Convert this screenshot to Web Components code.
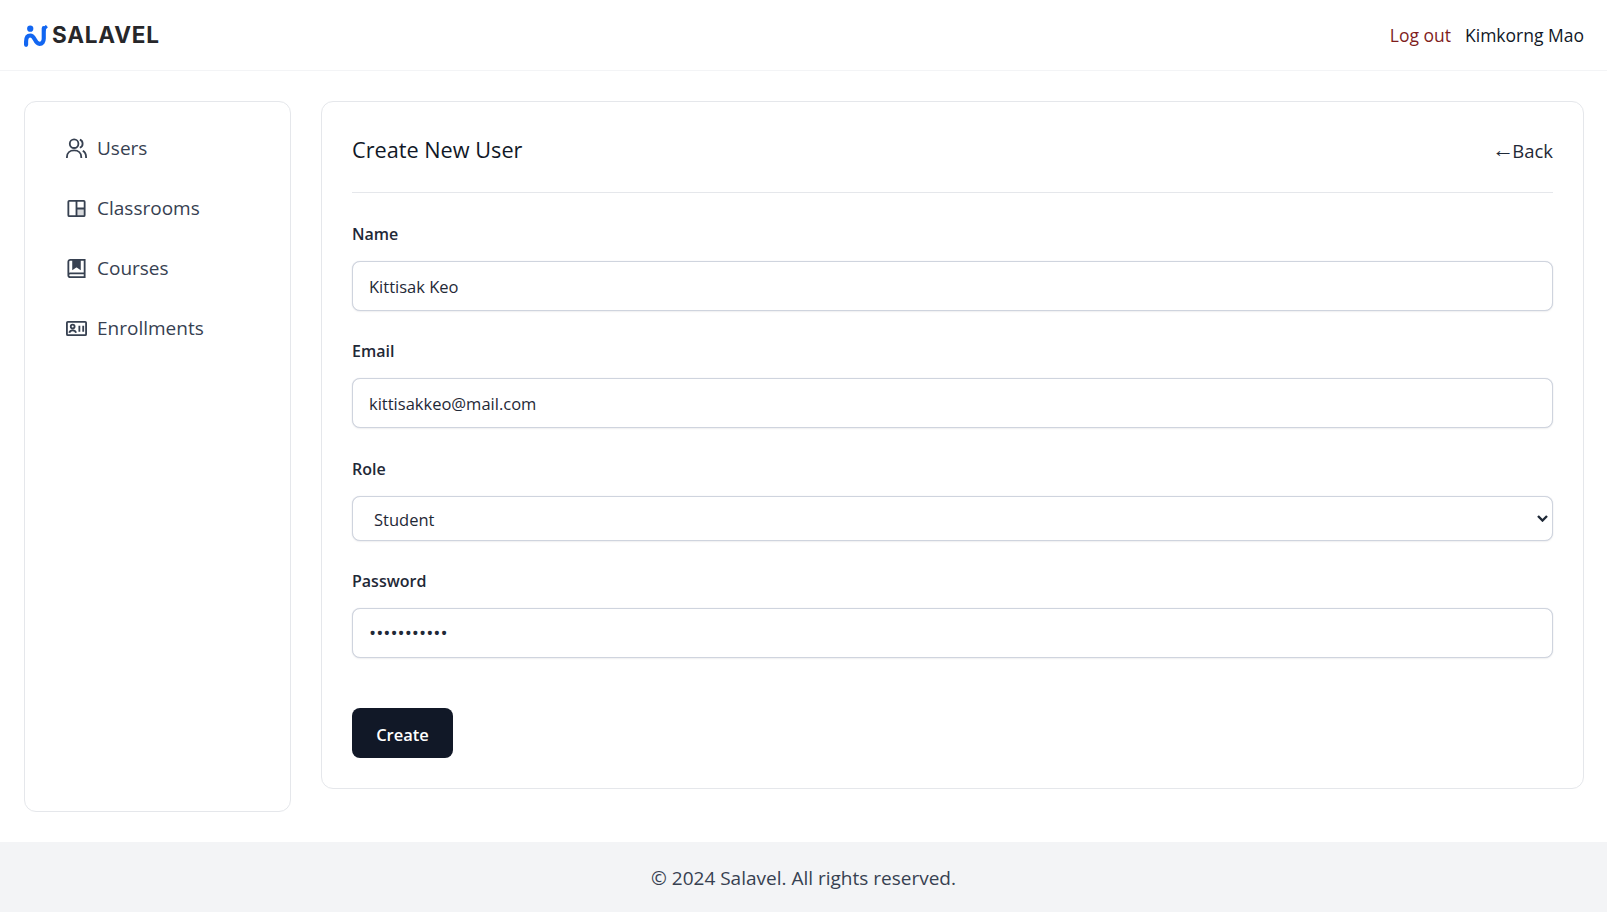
<!DOCTYPE html>
<html lang="en">
<head>
<meta charset="utf-8">
<title>Create New User</title>
<style>
    html, body { margin: 0; height: 100%; }
    body { font-family: "Open Sans", "Noto Sans", sans-serif; color: #111827; background: #fff; }
</style>
</head>
<body>
<app-shell>
    <site-header slot="header" user="Kimkorng Mao"></site-header>
    <side-nav slot="side">
        <nav-item icon="users">Users</nav-item>
        <nav-item icon="layout">Classrooms</nav-item>
        <nav-item icon="book">Courses</nav-item>
        <nav-item icon="card">Enrollments</nav-item>
    </side-nav>
    <user-form slot="main">
        <form-field label="Name" value="Kittisak Keo"></form-field>
        <form-field label="Email" value="kittisakkeo@mail.com"></form-field>
        <form-field label="Role" type="select" value="Student"></form-field>
        <form-field label="Password" type="password" value="kittisakkeo"></form-field>
    </user-form>
    <site-footer slot="footer"></site-footer>
</app-shell>

<script>
const icons = {
    users: `<circle cx="9.500" cy="7" r="4.500"/><path d="M2 22v-1c0-4.400 3.200-7 7.500-7s7.500 2.600 7.500 7v1"/><path d="M15.500 2.800a4.500 4.500 0 0 1 0 8.400"/><path d="M18.500 14.500c2.200 1 3.500 3.200 3.500 6.500v1"/>`,
    layout: `<rect x="3.500" y="4" width="17" height="16" rx="1"/><path d="M12 4v16M12 12h8.500"/><rect x="12" y="12" width="8.500" height="8" fill="currentColor" fill-opacity=".2" stroke="none"/>`,
    book: `<path d="M3.500 19V5a2 2 0 0 1 2-2h15v18h-15a2 2 0 0 1-2-2Zm0 0a2 2 0 0 1 2-2h15"/><path d="M8.500 3h7v9l-3.500-2.300-3.500 2.300Z" fill="currentColor"/>`,
    card: `<rect x="2" y="5" width="20" height="14" rx="1"/><circle cx="8" cy="10" r="2"/><path d="M4.500 16.500c.5-2 2-2.500 3.500-2.500s3 .5 3.500 2.500M15 9v6.500M19 9v6.500"/>`
};

class AppShell extends HTMLElement {
    constructor() {
        super();
        this.attachShadow({mode: "open"});
        this.shadowRoot.innerHTML = `
            <style>
                :host { display: flex; flex-direction: column; min-height: 912px; }
                .body { display: flex; align-items: flex-start; gap: 30px; padding: 30px 23px 30px 24px; }
                .side { width: 267px; flex: none; }
                .main { flex: 1; min-width: 0; }
            </style>
            <slot name="header"></slot>
            <div class="body">
                <div class="side"><slot name="side"></slot></div>
                <div class="main"><slot name="main"></slot></div>
            </div>
            <slot name="footer"></slot>
        `;
    }
}
customElements.define("app-shell", AppShell);

class SiteHeader extends HTMLElement {
    constructor() {
        super();
        this.attachShadow({mode: "open"});
        this.shadowRoot.innerHTML = `
            <style>
                :host { display: flex; align-items: center; justify-content: space-between; height: 70px; padding: 0 23px 0 24px; border-bottom: 1px solid #f3f4f6; }
                .logo { display: flex; align-items: center; gap: 2px; padding-top: 1px; font: 700 22.500px/1 Inter, sans-serif; letter-spacing: .8px; color: #27272a; }
                svg { width: 26px; height: 22px; }
                .right { display: flex; align-items: center; gap: 14px; font-size: 17.500px; }
                .out { color: #7f1d1d; }
            </style>
            <div class="logo">
                <svg viewBox="0 0 25 21" fill="none">
                    <circle cx="6" cy="3.500" r="3" fill="#1266f1"/>
                    <path d="M2 19v-3c0-4 1.500-6 4-6s3.500 2 4.500 4 2 4 4.500 4 4-2 4-5V3" stroke="#1266f1" stroke-width="4" stroke-linecap="round"/>
                    <path d="M19 6c0-1 .5-3 3-5" stroke="#1266f1" stroke-width="3"/>
                </svg>
                <span>SALAVEL</span>
            </div>
            <div class="right"><span class="out">Log out</span><span class="user"></span></div>
        `;
    }

    connectedCallback() {
        this.shadowRoot.querySelector(".user").textContent = this.getAttribute("user");
    }
}
customElements.define("site-header", SiteHeader);

class SideNav extends HTMLElement {
    constructor() {
        super();
        this.attachShadow({mode: "open"});
        this.shadowRoot.innerHTML = `
            <style>
                :host { display: flex; flex-direction: column; box-sizing: border-box; height: 711px; padding: 16px 40px; border: 1px solid #e5e7eb; border-radius: 12px; }
            </style>
            <slot></slot>
        `;
    }
}
customElements.define("side-nav", SideNav);

class NavItem extends HTMLElement {
    constructor() {
        super();
        this.attachShadow({mode: "open"});
        this.shadowRoot.innerHTML = `
            <style>
                :host { display: flex; align-items: center; gap: 9px; height: 60px; font-size: 19px; font-weight: 500; color: #374151; }
                svg { width: 23px; height: 23px; flex: none; fill: none; stroke: currentColor; stroke-width: 1.900; }
            </style>
            <svg viewBox="0 0 24 24"></svg>
            <slot></slot>
        `;
    }

    connectedCallback() {
        this.shadowRoot.querySelector("svg").innerHTML = icons[this.getAttribute("icon")];
    }
}
customElements.define("nav-item", NavItem);

class FormField extends HTMLElement {
    constructor() {
        super();
        this.attachShadow({mode: "open"});
    }

    connectedCallback() {
        const type = this.getAttribute("type") || "text";
        const value = this.getAttribute("value");
        const control = type == "select"
            ? `<div class="wrap"><select><option>${value}</option></select>
               <svg viewBox="0 0 11 7" fill="none"><path d="M1 1l4.500 4.500L10 1" stroke="#1f2937" stroke-width="2.400"/></svg></div>`
            : `<input type="${type}" value="${value}">`;
        this.shadowRoot.innerHTML = `
            <style>
                :host { display: flex; flex-direction: column; gap: 15px; }
                label { font-size: 16px; line-height: 24px; font-weight: 600; color: #1f2937; }
                input, select { box-sizing: border-box; display: block; width: 100%; height: 50px; padding: 0 16px; font: 16.500px "Open Sans", sans-serif; color: #1f2937; background: #fff; border: 1px solid #cfd4de; border-radius: 8px; outline: none; box-shadow: 0 0 1px #cfd4de, 0 1px 2px rgba(0,0,0,.05); }
                input[type=password] { font-size: 19px; }
                select { height: 45px; padding: 2px 21px 0; appearance: none; }
                .wrap { position: relative; }
                .wrap svg { position: absolute; top: 19px; right: 5px; width: 11px; height: 7px; }
            </style>
            <label>${this.getAttribute("label")}</label>
            ${control}
        `;
    }
}
customElements.define("form-field", FormField);

class UserForm extends HTMLElement {
    constructor() {
        super();
        this.attachShadow({mode: "open"});
        this.shadowRoot.innerHTML = `
            <style>
                :host { display: block; box-sizing: border-box; height: 688px; padding: 0 30px; border: 1px solid #e5e7eb; border-radius: 12px; }
                .head { display: flex; align-items: center; justify-content: space-between; box-sizing: border-box; height: 91px; padding-top: 4px; border-bottom: 1px solid #e5e7eb; }
                h1 { margin: 0; font-size: 21.700px; font-weight: 500; color: #111827; }
                .back { padding-top: 2px; font-size: 18.500px; color: #1f2937; }
                .arrow { position: relative; top: -1px; margin-right: -2px; font: 22px/0 "Liberation Sans", sans-serif; }
                .fields { display: flex; flex-direction: column; gap: 28.400px; padding-top: 29px; }
                button { display: block; width: 101px; height: 50px; margin-top: 49.500px; padding: 3px 0 0; font: 600 16.500px "Open Sans", sans-serif; color: #fff; background: #111827; border: 0; border-radius: 8px; }
            </style>
            <div class="head">
                <h1>Create New User</h1>
                <span class="back"><span class="arrow">←</span>Back</span>
            </div>
            <div class="fields"><slot></slot></div>
            <button>Create</button>
        `;
    }
}
customElements.define("user-form", UserForm);

class SiteFooter extends HTMLElement {
    constructor() {
        super();
        this.attachShadow({mode: "open"});
        this.shadowRoot.innerHTML = `
            <style>
                :host { display: flex; align-items: center; justify-content: center; height: 70px; padding-top: 1px; box-sizing: border-box; background: #f3f4f6; font-size: 19px; color: #374151; }
            </style>
            © 2024 Salavel. All rights reserved.
        `;
    }
}
customElements.define("site-footer", SiteFooter);
</script>
</body>
</html>
